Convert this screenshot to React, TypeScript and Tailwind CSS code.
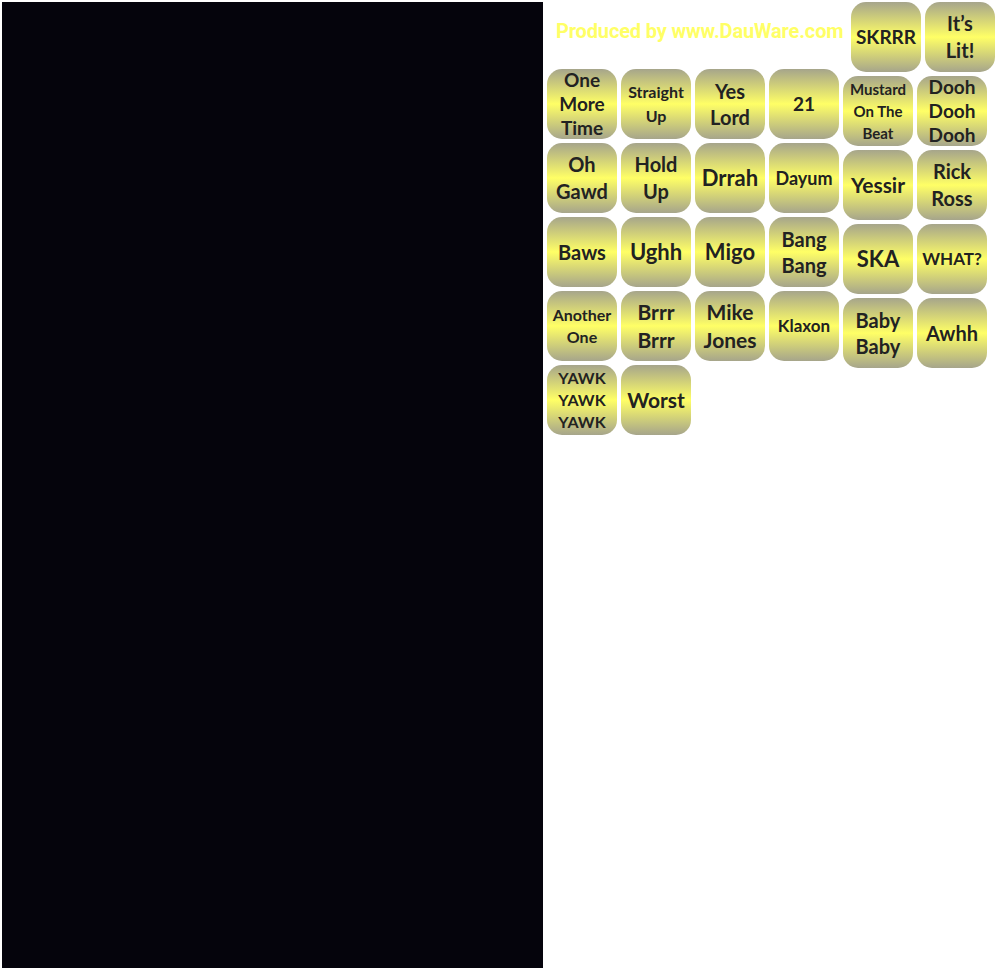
import React from "react";

type B = { t: string[]; s: string };

const left: B[] = [
  { t: ["One", "More", "Time"], s: "text-[19px] leading-[24px]" },
  { t: ["Straight", "Up"], s: "text-[16px] leading-[24px]" },
  { t: ["Yes", "Lord"], s: "text-[20px] leading-[26px]" },
  { t: ["21"], s: "text-[19px] leading-[24px]" },
  { t: ["Oh", "Gawd"], s: "text-[20px] leading-[27px]" },
  { t: ["Hold", "Up"], s: "text-[20px] leading-[27px]" },
  { t: ["Drrah"], s: "text-[22px] leading-[26px]" },
  { t: ["Dayum"], s: "text-[18px] leading-[24px]" },
  { t: ["Baws"], s: "text-[20px] leading-[26px]" },
  { t: ["Ughh"], s: "text-[22px] leading-[26px]" },
  { t: ["Migo"], s: "text-[22px] leading-[26px]" },
  { t: ["Bang", "Bang"], s: "text-[20px] leading-[26px]" },
  { t: ["Another", "One"], s: "text-[16px] leading-[22px]" },
  { t: ["Brrr", "Brrr"], s: "text-[21px] leading-[28px]" },
  { t: ["Mike", "Jones"], s: "text-[21px] leading-[28px]" },
  { t: ["Klaxon"], s: "text-[17px] leading-[24px]" },
  { t: ["YAWK", "YAWK", "YAWK"], s: "text-[16px] leading-[22px]" },
  { t: ["Worst"], s: "text-[21px] leading-[26px]" },
];

const right: B[] = [
  { t: ["Mustard", "On The", "Beat"], s: "text-[15px] leading-[22px]" },
  { t: ["Dooh", "Dooh", "Dooh"], s: "text-[19px] leading-[24px]" },
  { t: ["Yessir"], s: "text-[21px] leading-[26px]" },
  { t: ["Rick", "Ross"], s: "text-[20px] leading-[27px]" },
  { t: ["SKA"], s: "text-[22px] leading-[26px]" },
  { t: ["WHAT?"], s: "text-[17px] leading-[24px]" },
  { t: ["Baby", "Baby"], s: "text-[20px] leading-[26px]" },
  { t: ["Awhh"], s: "text-[20px] leading-[26px]" },
];

function Btn({ b }: { b: B }) {
  return (
    <div
      className={`w-[70px] h-[70px] rounded-[15px] flex flex-col items-center justify-center text-center font-bold text-[#222222] bg-[linear-gradient(to_bottom,#a6a58b_0%,#ffff66_50%,#a6a58b_100%)] ${b.s}`}
    >
      {b.t.map((l, i) => (
        <span key={i} className="whitespace-nowrap">{l}</span>
      ))}
    </div>
  );
}

export default function App() {
  return (
    <div className="flex h-[970px] bg-white p-[2px] font-['Lato','Noto_Sans',sans-serif]">
      <div className="w-[541px] h-[966px] bg-[#05040c]" />
      <div className="flex gap-[4px] ml-[4px]">
        <div className="w-[292px]">
          <div className="h-[67px] pl-[9px] pt-[14px] whitespace-nowrap">
            <span className="font-['Roboto',sans-serif] font-bold text-[20px] tracking-[-0.15px] text-[#ffff66]">
              Produced by www.DauWare.com
            </span>
          </div>
          <div className="grid grid-cols-4 gap-[4px]">
            {left.map((b, i) => (
              <Btn key={i} b={b} />
            ))}
          </div>
        </div>
        <div className="flex flex-col gap-[4px]">
          <div className="flex gap-[4px] pl-[8px]">
            <Btn b={{ t: ["SKRRR"], s: "text-[19px] leading-[24px]" }} />
            <Btn b={{ t: ["It’s", "Lit!"], s: "text-[20px] leading-[27px]" }} />
          </div>
          <div className="grid grid-cols-[70px_70px] gap-[4px] w-fit">
            {right.map((b, i) => (
              <Btn key={i} b={b} />
            ))}
          </div>
        </div>
      </div>
    </div>
  );
}
